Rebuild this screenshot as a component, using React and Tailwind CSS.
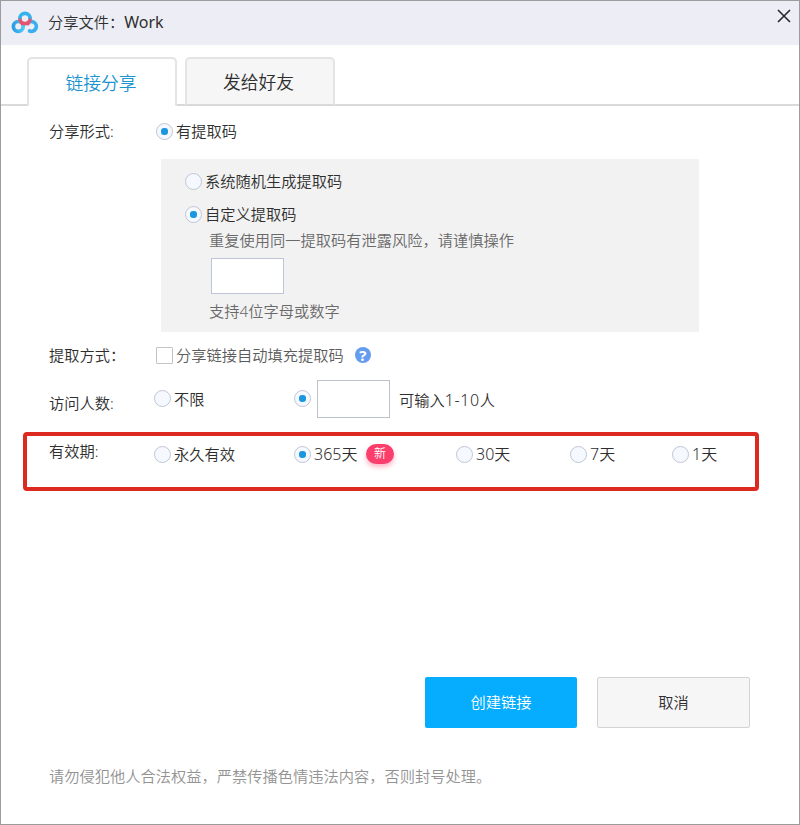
/**
 * Fenêtre de partage de fichier.
 *
 * @module App
 */

import clsx from "clsx";

/**
 * Logo : trois anneaux entrelacés.
 */
function Logo() {
    return (
        <svg width="28" height="24" viewBox="0 0 28 24" fill="none" strokeWidth="3.7">
            <defs>
                <linearGradient id="haut" x1="0" y1="0" x2="0" y2="1">
                    <stop offset="0.4" stopColor="#35b3ee" />
                    <stop offset="0.65" stopColor="#e5556e" />
                </linearGradient>
                <linearGradient id="gauche" x1="0" y1="0" x2="1" y2="0">
                    <stop offset="0" stopColor="#2f9de6" />
                    <stop offset="1" stopColor="#4cc8f4" />
                </linearGradient>
            </defs>
            <circle cx="7.3" cy="15.4" r="4.9" stroke="url(#gauche)" />
            <path d="M16.4 12.6A4.9 4.9 0 1 1 18.6 20" stroke="#3aaeee" strokeLinecap="round" />
            <circle cx="14" cy="7.5" r="5.1" stroke="url(#haut)" />
            <path d="M11 12 9.6 13.4M17 12 18.4 13.6" stroke="#e5556e" strokeWidth="3" />
        </svg>
    );
}

/**
 * Bouton radio.
 */
function Radio({ coche }) {
    return (
        <span className="flex size-[17px] shrink-0 items-center justify-center rounded-full border-[1.5px] border-[#bfc5d3] bg-[#f5f9ff]">
            {coche && <span className="size-[7px] rounded-[3px] bg-[#1a97de]" />}
        </span>
    );
}

/**
 * Option : bouton radio suivi de son libellé.
 */
function Option({ coche, className, children }) {
    return (
        <div className={clsx("flex items-center gap-[3px]", className)}>
            <Radio coche={coche} />
            <span>{children}</span>
        </div>
    );
}

function App() {
    return (
        <div className="flex h-[825px] w-[800px] flex-col overflow-hidden whitespace-nowrap border border-[#9c9c9f] bg-white font-['Noto_Sans','Noto_Sans_CJK_SC',sans-serif] text-[15.25px] leading-[20px] font-[350] text-[#2e2e2e]">
            {/* Barre de titre */}
            <header className="flex h-11 shrink-0 justify-between bg-[#edeef5] pl-2.5">
                <div className="flex items-center gap-[9px]">
                    <Logo />
                    <h1 className="-mt-0.5">
                        分享文件：<span className="text-[16px] font-normal">Work</span>
                    </h1>
                </div>
                <svg className="mt-2 mr-[8px]" width="14" height="14" viewBox="0 0 14 14" stroke="#26262b" strokeWidth="1.6">
                    <path d="M1 1 13 13M13 1 1 13" />
                </svg>
            </header>

            {/* Onglets */}
            <nav className="mt-3 flex h-[49px] shrink-0 items-stretch text-[17.8px]">
                <span className="w-[26px] border-b-2 border-[#d9d9db]" />
                <div className="flex w-[150px] items-center justify-center rounded-t-[5px] border-2 border-b-0 border-[#e4e4e6] pr-0.5 text-[#1b94cf]">
                    链接分享
                </div>
                <span className="w-[8px] border-b-2 border-[#d9d9db]" />
                <div className="flex w-[150px] items-center justify-center rounded-t-[5px] border-2 border-[#e4e4e6] border-b-[#d9d9db] bg-[#f6f6f6] pr-[3px]">
                    发给好友
                </div>
                <span className="flex-1 border-b-2 border-[#d9d9db]" />
            </nav>

            {/* Forme du partage */}
            <div className="mt-4 flex h-[18px] shrink-0 items-center pl-12">
                <span className="w-[107px]">分享形式:</span>
                <Option coche>有提取码</Option>
            </div>

            <section className="mt-[19px] ml-[160px] h-[173px] w-[538px] shrink-0 bg-[#f2f2f2] pt-[12px] pl-6">
                <Option>系统随机生成提取码</Option>
                <Option coche className="mt-[13px]">自定义提取码</Option>
                <div className="mt-[6px] ml-6 text-[#6a6a6a]">
                    <p>重复使用同一提取码有泄露风险，请谨慎操作</p>
                    <div className="mt-[8px] ml-0.5 h-9 w-[73px] border border-[#bcc6d4] bg-white" />
                    <p className="mt-[7px]">支持4位字母或数字</p>
                </div>
            </section>

            {/* Mode d'extraction */}
            <div className="mt-[13px] flex h-5 shrink-0 items-center pl-12">
                <span className="w-[107px]">提取方式：</span>
                <span className="mr-[3px] size-[17px] rounded-[1px] border-[1.5px] border-[#c3c4c8]" />
                <span className="text-[#5c5c5c]">分享链接自动填充提取码</span>
                <span className="ml-[11px] flex size-4 items-center justify-center rounded-full bg-[#659cf0] text-[15px] font-bold text-white">
                    ?
                </span>
            </div>

            {/* Nombre de visiteurs */}
            <div className="mt-[15px] flex h-[38px] shrink-0 pl-12">
                <span className="mt-[13px] w-[105px]">访问人数:</span>
                <Option className="h-[37px] w-[140px]">不限</Option>
                <div className="flex h-[37px] items-center">
                    <Radio coche />
                </div>
                <div className="ml-[6px] h-[38px] w-[73px] border border-[#bcc1cb]" />
                <span className="mt-[10px] ml-[9px]">
                    可输入<span className="text-[16px] tracking-[0.6px]">1-10</span>人
                </span>
            </div>

            {/* Durée de validité */}
            <div className="mt-[14px] ml-[22px] flex h-[59px] w-[736px] shrink-0 rounded-[4px] border-4 border-[#dd2a20] pl-[22px]">
                <span className="mt-[5px] w-[105px]">有效期:</span>
                <div className="mt-[8px] flex h-5 items-center">
                    <Option className="w-[140px]">永久有效</Option>
                    <Option coche className="w-[64px] text-[16px]">365天</Option>
                    <span className="ml-[8px] flex h-5 w-7 items-center justify-center rounded-full bg-[#fb3e6b] text-[12px] text-white shadow-[0_3px_5px_#fb3e6b66]">
                        新
                    </span>
                    <Option className="ml-[62px] w-[114px] text-[16px]">30天</Option>
                    <Option className="w-[102px] text-[16px]">7天</Option>
                    <Option className="text-[16px]">1天</Option>
                </div>
            </div>

            {/* Actions */}
            <div className="mt-[186px] flex shrink-0 gap-5 pl-[424px]">
                <button className="h-[51px] w-[152px] rounded-[2px] bg-[#06adff] pb-0.5 text-white">
                    创建链接
                </button>
                <button className="h-[51px] w-[153px] rounded-[2px] border border-[#d3d3d3] bg-[#f6f6f6] pb-0.5">
                    取消
                </button>
            </div>

            <footer className="mt-[38px] pl-12 text-[#939393]">
                请勿侵犯他人合法权益，严禁传播色情违法内容，否则封号处理。
            </footer>
        </div>
    );
}

export default App;
